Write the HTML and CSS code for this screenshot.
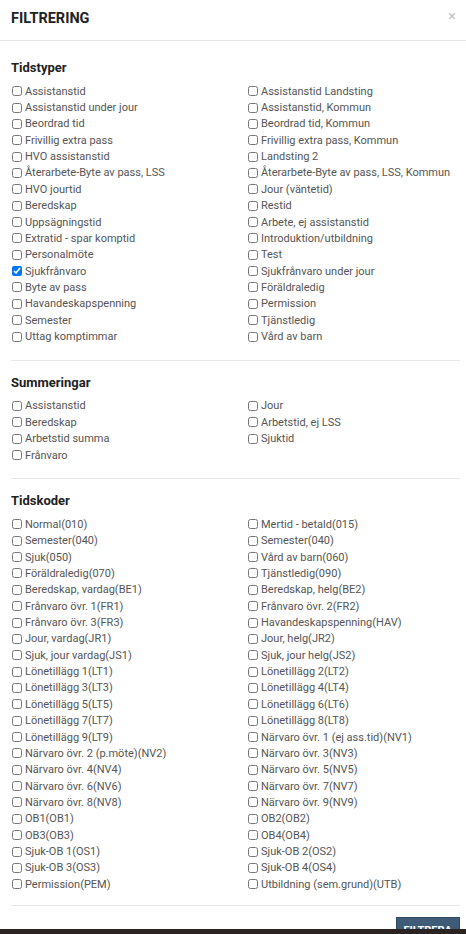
FILE: index.html
```html
<!DOCTYPE html>
<html lang="sv">
<head>
	<meta charset="UTF-8">
	<title>Filtrering</title>
	<link rel="stylesheet" href="styles.css">
</head>
<body>
	<div class="modal">
		<div class="modal-header">
			<h4 class="modal-title">FILTRERING</h4>
			<span class="close">&times;</span>
		</div>
		<div class="modal-body">
			<div class="group">
				<h5>Tidstyper</h5>
				<div class="checks">
					<label><input type="checkbox"> Assistanstid</label>
					<label><input type="checkbox"> Assistanstid Landsting</label>
					<label><input type="checkbox"> Assistanstid under jour</label>
					<label><input type="checkbox"> Assistanstid, Kommun</label>
					<label><input type="checkbox"> Beordrad tid</label>
					<label><input type="checkbox"> Beordrad tid, Kommun</label>
					<label><input type="checkbox"> Frivillig extra pass</label>
					<label><input type="checkbox"> Frivillig extra pass, Kommun</label>
					<label><input type="checkbox"> HVO assistanstid</label>
					<label><input type="checkbox"> Landsting 2</label>
					<label><input type="checkbox"> Återarbete-Byte av pass, LSS</label>
					<label><input type="checkbox"> Återarbete-Byte av pass, LSS, Kommun</label>
					<label><input type="checkbox"> HVO jourtid</label>
					<label><input type="checkbox"> Jour (väntetid)</label>
					<label><input type="checkbox"> Beredskap</label>
					<label><input type="checkbox"> Restid</label>
					<label><input type="checkbox"> Uppsägningstid</label>
					<label><input type="checkbox"> Arbete, ej assistanstid</label>
					<label><input type="checkbox"> Extratid - spar komptid</label>
					<label><input type="checkbox"> Introduktion/utbildning</label>
					<label><input type="checkbox"> Personalmöte</label>
					<label><input type="checkbox"> Test</label>
					<label><input type="checkbox" checked> Sjukfrånvaro</label>
					<label><input type="checkbox"> Sjukfrånvaro under jour</label>
					<label><input type="checkbox"> Byte av pass</label>
					<label><input type="checkbox"> Föräldraledig</label>
					<label><input type="checkbox"> Havandeskapspenning</label>
					<label><input type="checkbox"> Permission</label>
					<label><input type="checkbox"> Semester</label>
					<label><input type="checkbox"> Tjänstledig</label>
					<label><input type="checkbox"> Uttag komptimmar</label>
					<label><input type="checkbox"> Vård av barn</label>
				</div>
			</div>
			<div class="group">
				<h5>Summeringar</h5>
				<div class="checks">
					<label><input type="checkbox"> Assistanstid</label>
					<label><input type="checkbox"> Jour</label>
					<label><input type="checkbox"> Beredskap</label>
					<label><input type="checkbox"> Arbetstid, ej LSS</label>
					<label><input type="checkbox"> Arbetstid summa</label>
					<label><input type="checkbox"> Sjuktid</label>
					<label><input type="checkbox"> Frånvaro</label>
				</div>
			</div>
			<div class="group">
				<h5>Tidskoder</h5>
				<div class="checks">
					<label><input type="checkbox"> Normal(010)</label>
					<label><input type="checkbox"> Mertid - betald(015)</label>
					<label><input type="checkbox"> Semester(040)</label>
					<label><input type="checkbox"> Semester(040)</label>
					<label><input type="checkbox"> Sjuk(050)</label>
					<label><input type="checkbox"> Vård av barn(060)</label>
					<label><input type="checkbox"> Föräldraledig(070)</label>
					<label><input type="checkbox"> Tjänstledig(090)</label>
					<label><input type="checkbox"> Beredskap, vardag(BE1)</label>
					<label><input type="checkbox"> Beredskap, helg(BE2)</label>
					<label><input type="checkbox"> Frånvaro övr. 1(FR1)</label>
					<label><input type="checkbox"> Frånvaro övr. 2(FR2)</label>
					<label><input type="checkbox"> Frånvaro övr. 3(FR3)</label>
					<label><input type="checkbox"> Havandeskapspenning(HAV)</label>
					<label><input type="checkbox"> Jour, vardag(JR1)</label>
					<label><input type="checkbox"> Jour, helg(JR2)</label>
					<label><input type="checkbox"> Sjuk, jour vardag(JS1)</label>
					<label><input type="checkbox"> Sjuk, jour helg(JS2)</label>
					<label><input type="checkbox"> Lönetillägg 1(LT1)</label>
					<label><input type="checkbox"> Lönetillägg 2(LT2)</label>
					<label><input type="checkbox"> Lönetillägg 3(LT3)</label>
					<label><input type="checkbox"> Lönetillägg 4(LT4)</label>
					<label><input type="checkbox"> Lönetillägg 5(LT5)</label>
					<label><input type="checkbox"> Lönetillägg 6(LT6)</label>
					<label><input type="checkbox"> Lönetillägg 7(LT7)</label>
					<label><input type="checkbox"> Lönetillägg 8(LT8)</label>
					<label><input type="checkbox"> Lönetillägg 9(LT9)</label>
					<label><input type="checkbox"> Närvaro övr. 1 (ej ass.tid)(NV1)</label>
					<label><input type="checkbox"> Närvaro övr. 2 (p.möte)(NV2)</label>
					<label><input type="checkbox"> Närvaro övr. 3(NV3)</label>
					<label><input type="checkbox"> Närvaro övr. 4(NV4)</label>
					<label><input type="checkbox"> Närvaro övr. 5(NV5)</label>
					<label><input type="checkbox"> Närvaro övr. 6(NV6)</label>
					<label><input type="checkbox"> Närvaro övr. 7(NV7)</label>
					<label><input type="checkbox"> Närvaro övr. 8(NV8)</label>
					<label><input type="checkbox"> Närvaro övr. 9(NV9)</label>
					<label><input type="checkbox"> OB1(OB1)</label>
					<label><input type="checkbox"> OB2(OB2)</label>
					<label><input type="checkbox"> OB3(OB3)</label>
					<label><input type="checkbox"> OB4(OB4)</label>
					<label><input type="checkbox"> Sjuk-OB 1(OS1)</label>
					<label><input type="checkbox"> Sjuk-OB 2(OS2)</label>
					<label><input type="checkbox"> Sjuk-OB 3(OS3)</label>
					<label><input type="checkbox"> Sjuk-OB 4(OS4)</label>
					<label><input type="checkbox"> Permission(PEM)</label>
					<label><input type="checkbox"> Utbildning (sem.grund)(UTB)</label>
				</div>
			</div>
		</div>
		<div class="modal-footer">
			<button class="btn">FILTRERA</button>
		</div>
	</div>
</body>
</html>
```

FILE: styles.css
```css
*{
	margin: 0;
	padding: 0;
	box-sizing: border-box;
}
body{
	background: #2b2321;
	font-family: Roboto, "Liberation Sans", sans-serif;
	font-size: 11px;
	color: #555;
}
.modal{
	background: #fff;
	height: 929px;
	overflow: hidden;
}
.modal-header{
	display: flex;
	justify-content: space-between;
	align-items: flex-start;
	height: 41px;
	padding: 10px 10px 0 11px;
	border-bottom: 1px solid #e5e5e5;
}
.modal-title{
	font-size: 14.5px;
	font-weight: 700;
	color: #222;
	line-height: 18px;
}
.close{
	font-size: 15px;
	line-height: 12px;
	color: #c4c4c4;
	cursor: pointer;
}
.modal-body{
	padding: 5px 6px 0 11px;
}
.group{
	padding: 14px 0 15px;
	border-bottom: 1px solid #e8e8e8;
}
.group:last-child{
	padding-bottom: 13px;
}
.group h5{
	font-size: 13px;
	font-weight: 700;
	color: #222;
	line-height: 16px;
	margin-bottom: 7px;
}
.checks{
	display: grid;
	grid-template-columns: 236px 1fr;
}
.checks label{
	display: flex;
	align-items: center;
	height: 16.36px;
	white-space: nowrap;
	cursor: pointer;
}
.checks input{
	width: 10px;
	height: 10px;
	margin: 0 3px 0 1px;
}
.modal-footer{
	display: flex;
	justify-content: flex-end;
	padding: 11px 6px 0;
}
.btn{
	background: #3e5b77;
	color: #fff;
	border: 1px solid #2e4a63;
	font-family: Roboto, "Liberation Sans", sans-serif;
	font-size: 11px;
	font-weight: 700;
	padding: 6px 7px 10px;
	cursor: pointer;
}
```
